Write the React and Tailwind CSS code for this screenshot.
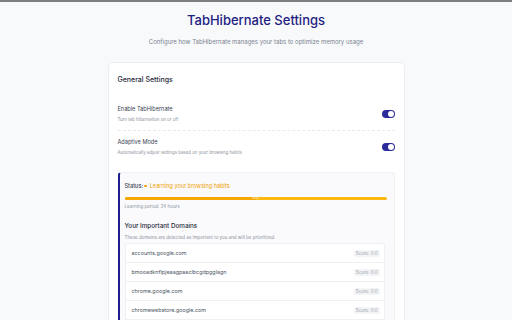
import { useState } from "react";

const domains = [
  "accounts.google.com",
  "bmooadknflpjeaagpaaclbcgdpgglagn",
  "chrome.google.com",
  "chromewebstore.google.com",
];

function Toggle({ on, onChange }) {
  return (
    <button
      onClick={() => onChange(!on)}
      className={`relative w-[13px] h-[8px] rounded-full shrink-0 ${on ? "bg-[#2b2a9a]" : "bg-gray-300"}`}
    >
      <span
        className={`absolute top-[1px] w-[6px] h-[6px] rounded-full bg-white ${on ? "right-[1px]" : "left-[1px]"}`}
      />
    </button>
  );
}

function SettingRow({ label, desc, on, onChange, divider }) {
  return (
    <div className={`flex items-center justify-between ${divider ? "border-b border-dashed border-[#e8eaee] pb-[7px]" : ""}`}>
      <div>
        <div className="text-[5.6px] leading-[8px] text-[#374151]">{label}</div>
        <div className="mt-[4px] text-[4.4px] leading-[6px] text-[#8b919c]">{desc}</div>
      </div>
      <Toggle on={on} onChange={onChange} />
    </div>
  );
}

export default function App() {
  const [enabled, setEnabled] = useState(true);
  const [adaptive, setAdaptive] = useState(true);

  return (
    <div className="h-[320px] overflow-hidden bg-[#f8f9fb] border-t-2 border-[#7d7f83] font-['Inter',sans-serif]">
      <div className="pt-[9px] text-center">
        <h1 className="text-[13px] leading-[18px] font-medium text-[#1e2284]">TabHibernate Settings</h1>
        <p className="mt-[8px] text-[6px] leading-[10px] text-[#7b8190]">
          Configure how TabHibernate manages your tabs to optimize memory usage
        </p>
      </div>

      <div className="mt-[15px] mx-auto w-[297px] bg-white border border-[#eceef2] rounded-[5px] px-[9px] pt-[12px] pb-[10px]">
        <h2 className="text-[7px] leading-[10px] font-medium text-[#1f2937]">General Settings</h2>

        <div className="mt-[20px]">
          <SettingRow
            label="Enable TabHibernate"
            desc="Turn tab hibernation on or off"
            on={enabled}
            onChange={setEnabled}
            divider
          />
        </div>
        <div className="pt-[7px]">
          <SettingRow
            label="Adaptive Mode"
            desc="Automatically adjust settings based on your browsing habits"
            on={adaptive}
            onChange={setAdaptive}
          />
        </div>

        <div className="mt-[16px] bg-[#fafafc] border border-[#f0f1f4] border-l-2 border-l-[#1e1f8c] rounded-[3px] pl-[5px] pr-[7px] pt-[9px] pb-[10px]">
          <div className="flex items-center text-[5.6px] leading-[8px]">
            <span className="font-medium text-[#374151]">Status:</span>
            <span className="ml-[1px] w-[2.5px] h-[2.5px] rounded-full bg-[#f59e0b]" />
            <span className="ml-[3px] text-[#f0a000]">Learning your browsing habits</span>
          </div>

          <div className="mt-[7px] relative h-[3px] rounded-full bg-[#fcb812] overflow-hidden">
            <div className="h-full w-1/2 bg-[#f7a800]" />
            <span className="absolute inset-0 flex items-center justify-center text-[3px] leading-[3px] text-white">
              50%
            </span>
          </div>

          <div className="mt-[4px] text-[4.5px] leading-[6px] text-[#8b919c]">Learning period: 24 hours</div>

          <h3 className="mt-[12px] text-[6.3px] leading-[9px] font-medium text-[#1f2937]">Your Important Domains</h3>
          <div className="mt-[4px] text-[4.5px] leading-[6px] text-[#8b919c]">
            These domains are detected as important to you and will be prioritized
          </div>

          <div className="mt-[2px] mr-[2px] border border-[#eef0f3] rounded-[2px] bg-white">
            {domains.map((d) => (
              <div key={d} className="h-[19px] flex items-center justify-between pl-[6px] pr-[4px] border-b border-[#eef0f3]">
                <span className="text-[5.4px] text-[#4b5563]">{d}</span>
                <span className="px-[2px] py-[1px] rounded-[2px] bg-[#f3f4f6] text-[4.5px] leading-[5px] text-[#9ca3af]">
                  Score: 0.0
                </span>
              </div>
            ))}
          </div>
        </div>
      </div>
    </div>
  );
}
